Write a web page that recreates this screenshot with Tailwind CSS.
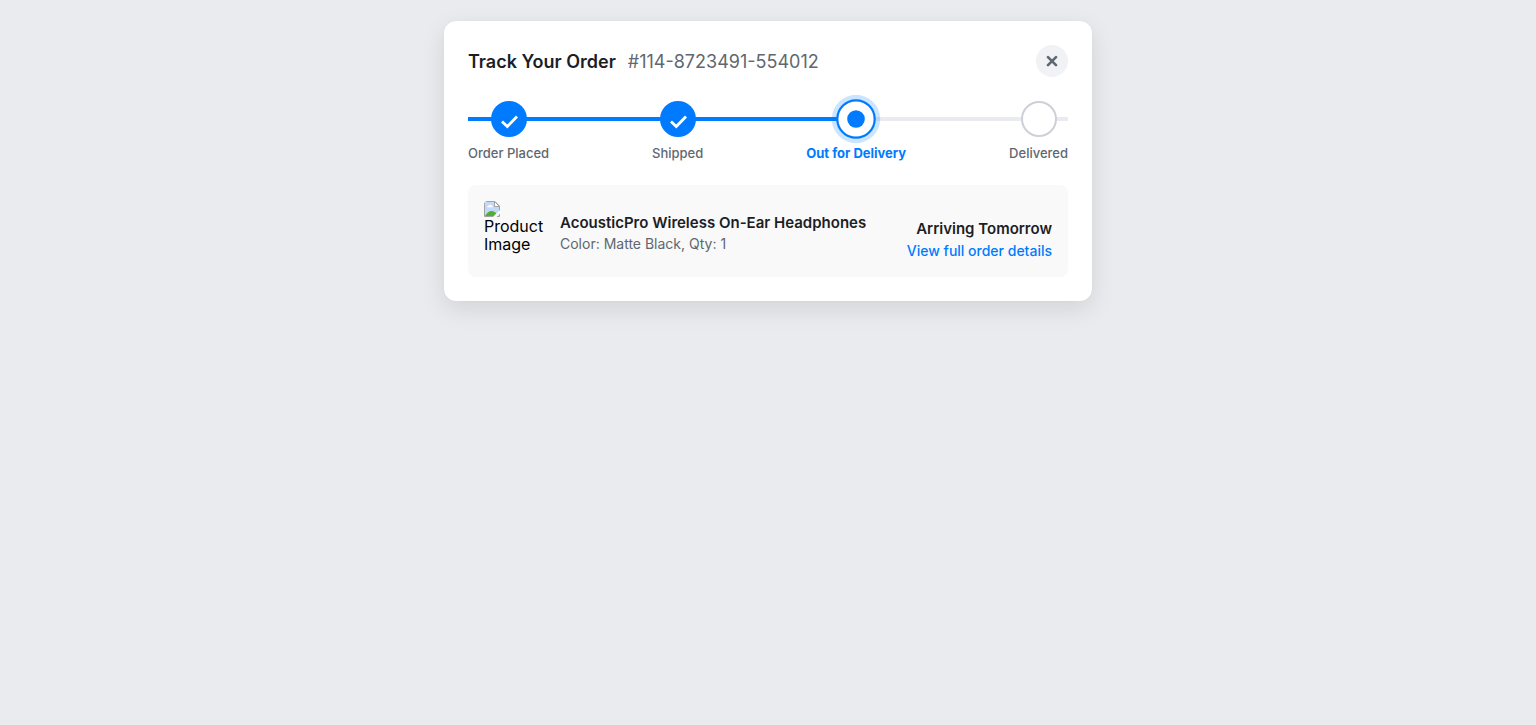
<!DOCTYPE html>
<html lang="en">
<head>
<meta charset="utf-8">
<meta name="viewport" content="width=device-width, initial-scale=1">
<title>Track Your Order</title>
<script src="https://cdn.jsdelivr.net/npm/@tailwindcss/browser@4"></script>
</head>
<body class="min-h-screen bg-[#e9ebee] px-4 pt-[21px] pb-5 font-['Inter','Liberation_Sans',sans-serif] text-[#1c1e26]">
<main class="mx-auto w-full max-w-[648px] rounded-xl bg-white p-6 shadow-[0_8px_24px_rgba(0,0,0,0.1),0_0_1px_rgba(0,0,0,0.1)]">
  <header class="flex items-center justify-between">
    <h1 class="flex items-baseline gap-3 pt-0.5 text-[18px] leading-6 font-semibold">Track Your Order <span class="font-normal text-[#606770]">#114-8723491-554012</span></h1>
    <button type="button" aria-label="Close" class="flex size-8 items-center justify-center rounded-full bg-[#f0f2f5] text-[#606770]">
      <svg class="size-3" viewBox="0 0 12 12" fill="none" stroke="currentColor" stroke-width="2.600" stroke-linecap="round" aria-hidden="true"><path d="M2 2.200 10 10.200M10 2.200 2 10.200"/></svg>
    </button>
  </header>

  <section aria-label="Delivery progress" class="relative mt-6">
    <div class="absolute inset-x-0 top-4 h-1 bg-[#e9ebee]"><div class="h-full w-[64%] bg-[#007bff]"></div></div>
    <ol class="relative flex justify-between text-[13px] leading-4 font-medium text-[#606770]">
      <li class="flex flex-col items-center gap-2">
        <span class="flex size-9 items-center justify-center rounded-full bg-[#007bff] text-white"><svg class="size-9" viewBox="0 0 36 36" fill="none" stroke="currentColor" stroke-width="2.800" aria-hidden="true"><path d="M11 20.500 16.300 25.500 26 15.500"/></svg></span>
        <span>Order Placed</span>
      </li>
      <li class="flex flex-col items-center gap-2">
        <span class="flex size-9 items-center justify-center rounded-full bg-[#007bff] text-white"><svg class="size-9" viewBox="0 0 36 36" fill="none" stroke="currentColor" stroke-width="2.800" aria-hidden="true"><path d="M11 20.500 16.300 25.500 26 15.500"/></svg></span>
        <span>Shipped</span>
      </li>
      <li aria-current="step" class="flex flex-col items-center gap-2 font-bold text-[#007bff]">
        <span class="flex size-9 scale-110 items-center justify-center rounded-full border-2 border-[#007bff] bg-white shadow-[0_0_0_4px_rgba(0,123,255,0.2)]"><span class="size-4 rounded-full bg-[#007bff]"></span></span>
        <span>Out for Delivery</span>
      </li>
      <li class="flex flex-col items-center gap-2">
        <span class="size-9 rounded-full border-2 border-[#ced0d8] bg-white"></span>
        <span>Delivered</span>
      </li>
    </ol>
  </section>

  <section aria-label="Item" class="mt-6 flex items-center gap-4 rounded-lg bg-[#f9f9f9] p-4">
    <div class="h-[60px] w-[60px] shrink-0 overflow-hidden rounded-sm text-[16px] leading-[18px] text-black">
      <svg class="size-4" viewBox="0 0 16 16" aria-hidden="true">
        <path d="M.5.500H11L15.500 5V15.500H.5Z" fill="#c3d9f7" stroke="#a3a3a3"/>
        <path d="M3 6.300a1.500 1.500 0 0 1 1.600-1.500 2 2 0 0 1 3.700.4 1 1 0 0 1 .5 1.100Z" fill="#fff"/>
        <path d="M1 15C3 11.500 6 9.500 9 10.200L12.500 12 10 15Z" fill="#52ad35"/>
        <path d="M10.500.500V5.500H15.500Z" fill="#fff" stroke="#a3a3a3"/>
        <path d="M16 9 9 16H12.500L16 12.500Z" fill="#f9f9f9"/>
      </svg>
      <p>Product Image</p>
    </div>
    <div class="flex-1 pt-1">
      <h2 class="text-[15px] leading-5 font-semibold">AcousticPro Wireless On-Ear Headphones</h2>
      <p class="mt-px text-[14px] leading-5 text-[#606770]">Color: Matte Black, Qty: 1</p>
    </div>
    <div class="self-end text-right">
      <p class="text-[15px] leading-5 font-semibold">Arriving Tomorrow</p>
      <a href="#" class="mt-0.5 block text-[14px] leading-5 font-medium text-[#007bff]">View full order details</a>
    </div>
  </section>
</main>
</body>
</html>
